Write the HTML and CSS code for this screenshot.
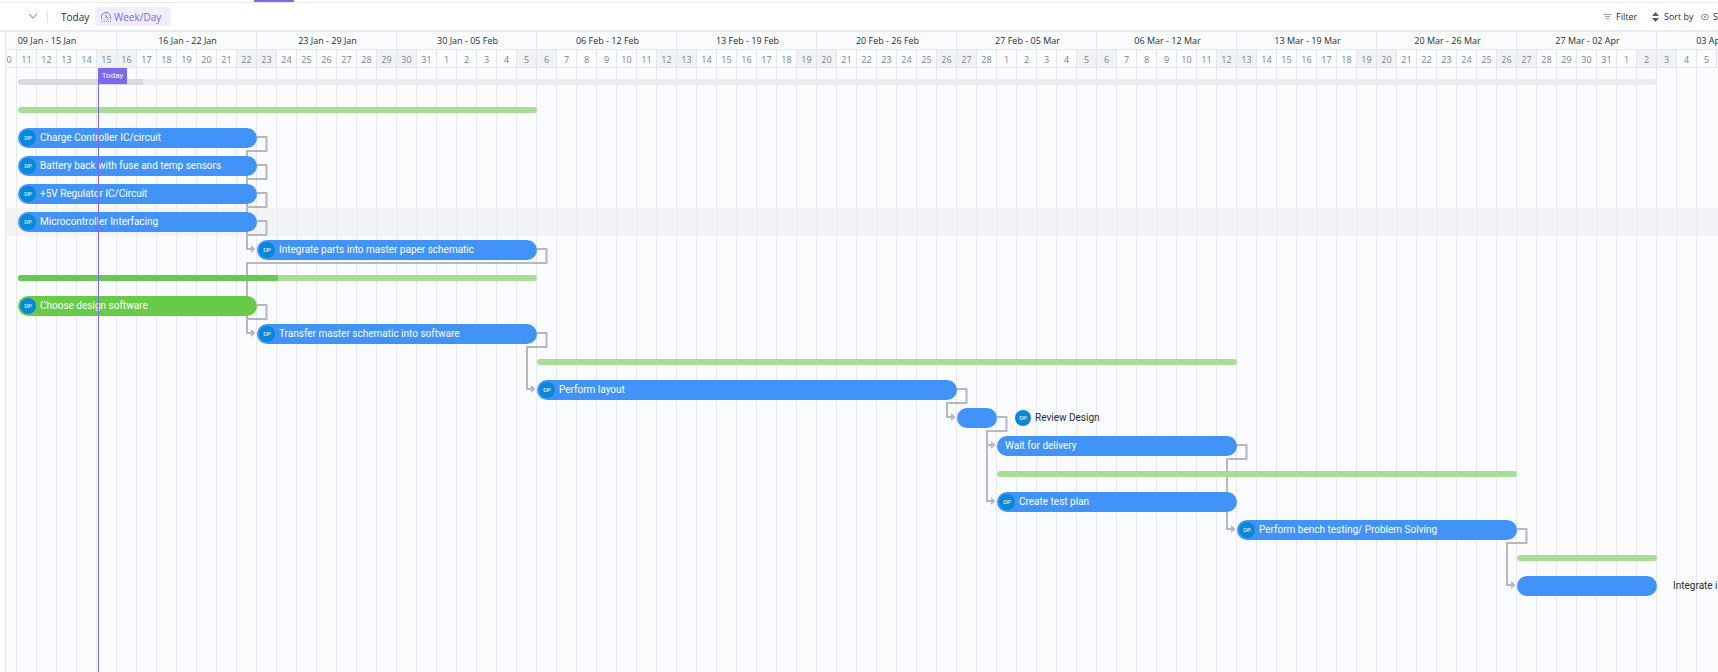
FILE: index.html
```html
<!DOCTYPE html>
<html lang="en">
<head>
<meta charset="utf-8">
<title>Gantt</title>
<link rel="stylesheet" href="styles.css">
</head>
<body>
<div class="tabs"><span class="tab-active"></span></div>
<header class="toolbar">
  <button class="collapse" aria-label="Expand"><svg width="10" height="7" viewBox="0 0 10 7"><path d="M1 1l4 4 4-4" fill="none" stroke="#a4a9b3" stroke-width="1.2"/></svg></button>
  <span class="divider"></span>
  <button class="today-btn">Today</button>
  <button class="zoom-btn"><svg width="10" height="10" viewBox="0 0 10 10" fill="none" stroke="#7b68ee" stroke-width=".9"><path d="M.6 7V4.600a4.400 4.100 0 0 1 8.800 0V7M5 2.800v2.700h2"/><path d="M.5 9.400h1M2.700 9.400h1M4.900 9.400h1M7.100 9.400h1M9 9.400h1M2.700 7.600h1M6.300 7.600h1"/></svg>Week/Day</button>
  <div class="tools">
    <button class="tool filter"><svg width="9" height="8" viewBox="0 0 9 8" stroke="#9a9fa9" fill="none"><path d="M.5 1.500h8M2 3.500h5M3 5.500h3"/></svg>Filter</button>
    <button class="tool sort"><svg width="7" height="10" viewBox="0 0 7 10" fill="#545b66"><path d="M3.500 0L7 4H0zM3.500 10L7 6H0z"/></svg>Sort by</button>
    <button class="tool show"><svg width="8" height="8" viewBox="0 0 8 8" fill="none" stroke="#777d88" stroke-width=".9"><ellipse cx="4" cy="4" rx="3.400" ry="2.800"/><circle cx="4" cy="4" r=".7"/></svg>Show</button>
  </div>
</header>
<main class="gantt">
  <div class="scale weeks">
    <span class="week first">09 Jan - 15 Jan</span><span class="week">16 Jan - 22 Jan</span><span class="week">23 Jan - 29 Jan</span><span class="week">30 Jan - 05 Feb</span><span class="week">06 Feb - 12 Feb</span><span class="week">13 Feb - 19 Feb</span><span class="week">20 Feb - 26 Feb</span><span class="week">27 Feb - 05 Mar</span><span class="week">06 Mar - 12 Mar</span><span class="week">13 Mar - 19 Mar</span><span class="week">20 Mar - 26 Mar</span><span class="week">27 Mar - 02 Apr</span><span class="week">03 Apr - 09 Apr</span>
  </div>
  <div class="scale days">
    <span>0</span><span>11</span><span>12</span><span>13</span><span>14</span><span class="off">15</span>
    <span class="off">16</span><span>17</span><span>18</span><span>19</span><span>20</span><span>21</span><span class="off">22</span>
    <span class="off">23</span><span>24</span><span>25</span><span>26</span><span>27</span><span>28</span><span class="off">29</span>
    <span class="off">30</span><span>31</span><span>1</span><span>2</span><span>3</span><span>4</span><span class="off">5</span>
    <span class="off">6</span><span>7</span><span>8</span><span>9</span><span>10</span><span>11</span><span class="off">12</span>
    <span class="off">13</span><span>14</span><span>15</span><span>16</span><span>17</span><span>18</span><span class="off">19</span>
    <span class="off">20</span><span>21</span><span>22</span><span>23</span><span>24</span><span>25</span><span class="off">26</span>
    <span class="off">27</span><span>28</span><span>1</span><span>2</span><span>3</span><span>4</span><span class="off">5</span>
    <span class="off">6</span><span>7</span><span>8</span><span>9</span><span>10</span><span>11</span><span class="off">12</span>
    <span class="off">13</span><span>14</span><span>15</span><span>16</span><span>17</span><span>18</span><span class="off">19</span>
    <span class="off">20</span><span>21</span><span>22</span><span>23</span><span>24</span><span>25</span><span class="off">26</span>
    <span class="off">27</span><span>28</span><span>29</span><span>30</span><span>31</span><span>1</span><span class="off">2</span>
    <span class="off">3</span><span>4</span><span>5</span>
  </div>
  <div class="chart">
    <svg class="links" width="1712" height="604" viewBox="6 68 1712 604">
      <defs><marker id="arrow" markerUnits="userSpaceOnUse" markerWidth="5" markerHeight="8" refX="1" refY="4" orient="0"><path d="M0 0l4.500 4L0 8z" fill="#b5b8c1"/></marker></defs>
      <path d="M257 137H266.500V151H247V249H252" marker-end="url(#arrow)"/>
      <path d="M257 165H266.500V179H247"/>
      <path d="M257 193H266.500V207H247"/>
      <path d="M257 221H266.500V235H247"/>
      <path d="M537 249H546.500V263H247V333H252" marker-end="url(#arrow)"/>
      <path d="M257 305H266.500V319H247"/>
      <path d="M537 333H546.500V347H527V389H532" marker-end="url(#arrow)"/>
      <path d="M957 389H966.500V403H947V417H952" marker-end="url(#arrow)"/>
      <path d="M997 417H1006.500V431H987V501H992" marker-end="url(#arrow)"/>
      <path d="M987 445H992" marker-end="url(#arrow)"/>
      <path d="M1237 445H1246.500V459H1227V529H1232" marker-end="url(#arrow)"/>
      <path d="M1517 529H1526.500V543H1507V585H1512" marker-end="url(#arrow)"/>
    </svg>
    <div class="row"><div class="bar group total" style="grid-column:2/84"><i class="done"></i></div></div>
    <div class="row"><div class="bar group" style="grid-column:2/28"></div></div>
    <div class="row"><div class="bar task" style="grid-column:2/14"><b class="avatar">DP</b>Charge Controller IC/circuit</div></div>
    <div class="row"><div class="bar task" style="grid-column:2/14"><b class="avatar">DP</b>Battery back with fuse and temp sensors</div></div>
    <div class="row"><div class="bar task" style="grid-column:2/14"><b class="avatar">DP</b>+5V Regulator IC/Circuit</div></div>
    <div class="row hover"><div class="bar task" style="grid-column:2/14"><b class="avatar">DP</b>Microcontroller Interfacing</div></div>
    <div class="row"><div class="bar task" style="grid-column:14/28"><b class="avatar">DP</b>Integrate parts into master paper schematic</div></div>
    <div class="row"><div class="bar group" style="grid-column:2/28"><i class="done half"></i></div></div>
    <div class="row"><div class="bar task complete" style="grid-column:2/14"><b class="avatar">DP</b>Choose design software</div></div>
    <div class="row"><div class="bar task" style="grid-column:14/28"><b class="avatar">DP</b>Transfer master schematic into software</div></div>
    <div class="row"><div class="bar group" style="grid-column:28/63"></div></div>
    <div class="row"><div class="bar task" style="grid-column:28/49"><b class="avatar">DP</b>Perform layout</div></div>
    <div class="row"><div class="bar task" style="grid-column:49/51"></div><div class="outside" style="grid-column:51/62"><b class="avatar">DP</b>Review Design</div></div>
    <div class="row"><div class="bar task plain" style="grid-column:51/63">Wait for delivery</div></div>
    <div class="row"><div class="bar group" style="grid-column:51/77"></div></div>
    <div class="row"><div class="bar task" style="grid-column:51/63"><b class="avatar">DP</b>Create test plan</div></div>
    <div class="row"><div class="bar task" style="grid-column:63/77"><b class="avatar">DP</b>Perform bench testing/ Problem Solving</div></div>
    <div class="row"><div class="bar group" style="grid-column:77/84"></div></div>
    <div class="row"><div class="bar task" style="grid-column:77/84"></div><div class="outside bare" style="grid-column:84/88">Integrate i</div></div>
    <div class="today-line"><span class="today-flag">Today</span></div>
  </div>
</main>
</body>
</html>
```
FILE: styles.css
```css
* { box-sizing: border-box; }
body {
  margin: 0;
  height: 100vh;
  display: flex;
  flex-direction: column;
  overflow: hidden;
  background: #fff;
  color: #292d34;
  font: 10px/14px "Open Sans", "Noto Sans", sans-serif;
}
button {
  border: 0;
  padding: 0;
  background: none;
  color: inherit;
  font: inherit;
  display: flex;
  align-items: center;
  white-space: nowrap;
}
svg { display: block; flex: none; }
.tabs { height: 3px; border-bottom: 1px solid #e9ebf0; padding-left: 254px; flex: none; }
.tab-active { display: block; width: 40px; height: 2px; background: #7b68ee; }
.toolbar {
  flex: none;
  display: flex;
  align-items: center;
  height: 29px;
  padding: 0 0 0 28px;
  border-bottom: 2px solid #e9eaed;
  overflow: hidden;
}
.divider { width: 1px; height: 12px; margin: 0 13px 0 9px; background: #dfe1e6; }
.today-btn { width: 34px; }
.zoom-btn {
  height: 19px;
  width: 76px;
  padding-left: 6px;
  gap: 3px;
  border-radius: 4px;
  background: #f0edfd;
  color: #7b68ee;
}
.tools { display: flex; width: 115px; margin-left: auto; overflow: hidden; font-size: 9px; }
.tool { flex: none; }
.filter { width: 49px; gap: 4px; }
.sort { width: 49px; gap: 5px; }
.show { gap: 4px; }

.gantt {
  flex: 1;
  display: flex;
  flex-direction: column;
  margin-left: 5px;
  border-left: 1px solid #e4e6eb;
  background: #fafbfd;
  overflow: hidden;
}
.scale { flex: none; display: flex; height: 18px; border-bottom: 1px solid #e6e8ec; font-size: 9px; }
.scale span {
  flex: none;
  display: flex;
  align-items: center;
  justify-content: center;
  border-right: 1px solid #e4e6eb;
  white-space: nowrap;
}
.scale .week { width: 140px; padding-left: 2px; }
.scale .first { width: 111px; padding: 0 28px 0 0; }
.days { color: #7c828d; }
.days span { width: 20px; padding-top: 2px; }
.days span:first-child { width: 11px; padding-right: 4px; }
.days .off { background: #f1f2f6; }

.chart {
  position: relative;
  flex: 1;
  font-family: Roboto, "Open Sans", sans-serif;
  background: repeating-linear-gradient(90deg, transparent 0 19px, #e6e8ed 19px 20px) -9px 0;
}
.row {
  display: grid;
  grid-template-columns: 12px 19px repeat(86, 20px);
  align-items: center;
  height: 28px;
}
.hover { background: rgba(236, 238, 243, .6); }
.bar { position: relative; }
.group { height: 6px; border-radius: 3px; background: #a8dd98; overflow: hidden; }
.total { background: #ebecee; }
.done { display: block; width: 125px; height: 100%; background: #d8d9db; }
.half { width: 50%; background: #6bc653; }
.task {
  display: flex;
  align-items: center;
  gap: 4px;
  height: 20px;
  padding: 0 2px;
  border-radius: 10px;
  background: #4193f7;
  color: #fff;
  white-space: nowrap;
}
.complete { background: #67cb48; }
.plain { padding-left: 8px; }
.avatar {
  flex: none;
  width: 16px;
  height: 16px;
  border-radius: 50%;
  background: #0788d8;
  color: #fff;
  font-size: 6px;
  font-weight: 400;
  line-height: 16px;
  text-align: center;
}
.outside { display: flex; align-items: center; gap: 4px; padding-left: 18px; white-space: nowrap; }
.bare { padding-left: 16px; }
.links { position: absolute; left: 0; top: 0; fill: none; stroke: #b5b8c1; stroke-width: 2; }
.links marker { stroke: none; }
.today-line { position: absolute; left: 92px; top: 0; bottom: 0; width: 1px; background: #7b68ee; }
.today-flag {
  display: block;
  width: 29px;
  height: 16px;
  background: #7b68ee;
  color: #fff;
  font-size: 8px;
  line-height: 16px;
  text-align: center;
}
```
